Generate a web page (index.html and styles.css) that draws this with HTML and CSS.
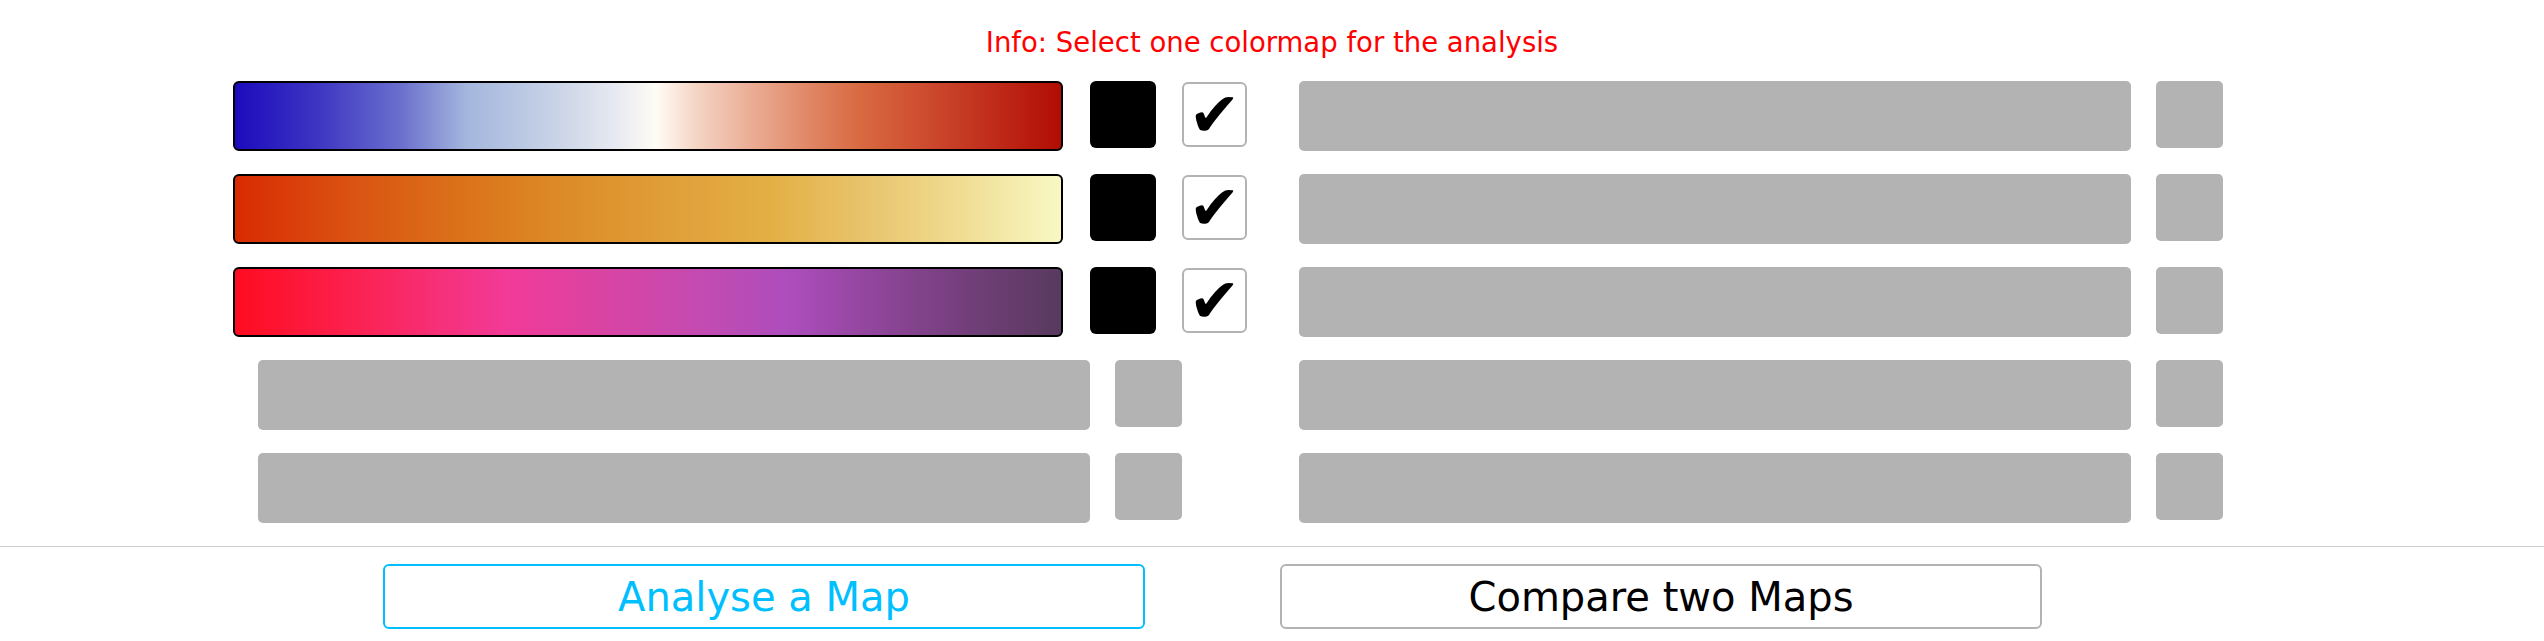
FILE: index.html
```html
<!DOCTYPE html>
<html>
<head>
<meta charset="utf-8">
<link rel="stylesheet" href="styles.css">
</head>
<body>
<div class="info">Info: Select one colormap for the analysis</div>
<div class="main">
  <div class="col col-left">
    <div class="row row-cmap">
      <div class="cbar cm-coolwarm"></div>
      <div class="swatch"></div>
      <div class="check">✔</div>
    </div>
    <div class="row row-cmap">
      <div class="cbar cm-orange"></div>
      <div class="swatch"></div>
      <div class="check">✔</div>
    </div>
    <div class="row row-cmap">
      <div class="cbar cm-magenta"></div>
      <div class="swatch"></div>
      <div class="check">✔</div>
    </div>
    <div class="row row-empty indent">
      <div class="gbar"></div>
      <div class="gsq"></div>
    </div>
    <div class="row row-empty indent">
      <div class="gbar"></div>
      <div class="gsq"></div>
    </div>
  </div>
  <div class="col col-right">
    <div class="row row-empty"><div class="gbar"></div><div class="gsq"></div></div>
    <div class="row row-empty"><div class="gbar"></div><div class="gsq"></div></div>
    <div class="row row-empty"><div class="gbar"></div><div class="gsq"></div></div>
    <div class="row row-empty"><div class="gbar"></div><div class="gsq"></div></div>
    <div class="row row-empty"><div class="gbar"></div><div class="gsq"></div></div>
  </div>
</div>
<div class="sep"></div>
<div class="actions">
  <button class="btn btn-active">Analyse a Map</button>
  <button class="btn">Compare two Maps</button>
</div>
</body>
</html>
```
FILE: styles.css
```css
html, body {
  margin: 0;
  padding: 0;
  background: #ffffff;
  font-family: "DejaVu Sans", "Liberation Sans", sans-serif;
}
.info {
  margin-top: 27px;
  height: 30px;
  line-height: 30px;
  font-size: 27.5px;
  color: #ff0000;
  text-align: center;
}
.main {
  display: flex;
  margin-top: 24px;
  padding-left: 233px;
}
.col {
  display: flex;
  flex-direction: column;
  gap: 23px;
}
.col-left {
  width: 1066px;
}
.row {
  display: flex;
  align-items: flex-start;
  height: 70px;
}
.indent {
  padding-left: 25px;
}
.cbar {
  box-sizing: border-box;
  width: 830px;
  height: 70px;
  border: 2px solid #000;
  border-radius: 6px;
}
.cm-coolwarm {
  background: linear-gradient(to right, #1c0bbd 0%, #3d35c2 10%, #6a6fcd 20%, #a3b6dd 28%, #c6d1e6 38%, #e6e9f0 46%, #fffcf5 51%, #f4d3c3 56%, #ebb098 62%, #df8462 70%, #d86840 76%, #c94229 86%, #b10d04 100%);
}
.cm-orange {
  background: linear-gradient(to right, #d92b02 0%, #da5513 15%, #db7119 27%, #dc8c28 40%, #e1a23c 55%, #e3b045 65%, #e8c36b 76%, #f0dd93 88%, #f8f8c4 100%);
}
.cm-magenta {
  background: linear-gradient(to right, #ff0c20 0%, #fb2252 15%, #f6307a 25%, #f23a98 33%, #d844a3 45%, #c24bb2 57%, #ad4dbd 67%, #8f4599 78%, #743f7c 88%, #583a5e 100%);
}
.swatch {
  width: 66px;
  height: 67px;
  margin-left: 27px;
  background: #000;
  border-radius: 6px;
}
.check {
  box-sizing: border-box;
  width: 65px;
  height: 65px;
  margin-left: 26px;
  margin-top: 1px;
  border: 2px solid #b3b3b3;
  border-radius: 6px;
  background: #fff;
  color: #000;
  font-size: 62px;
  line-height: 61px;
  text-align: center;
}
.gbar {
  width: 832px;
  height: 70px;
  background: #b3b3b3;
  border-radius: 5px;
}
.gsq {
  width: 67px;
  height: 67px;
  margin-left: 25px;
  background: #b3b3b3;
  border-radius: 5px;
}
.sep {
  margin-top: 23px;
  height: 1px;
  background: #cccccc;
}
.actions {
  display: flex;
  gap: 135px;
  margin-top: 17px;
  padding-left: 383px;
}
.btn {
  box-sizing: border-box;
  width: 762px;
  height: 65px;
  background: #fff;
  border: 2px solid #b3b3b3;
  border-radius: 6px;
  font-family: "DejaVu Sans", "Liberation Sans", sans-serif;
  font-size: 40px;
  color: #000;
  padding: 0;
  text-align: center;
}
.btn-active {
  border-color: #00bfff;
  color: #00bfff;
}
```
